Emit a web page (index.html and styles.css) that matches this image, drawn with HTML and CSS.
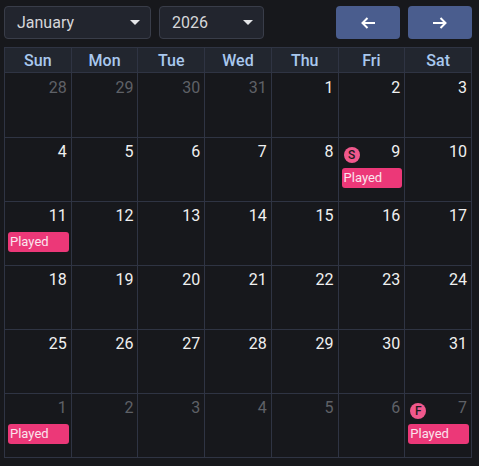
FILE: index.html
```html
<!DOCTYPE html>
<html>
<head>
<meta charset="utf-8">
<link rel="stylesheet" href="styles.css">
</head>
<body>
<div class="app">
  <div class="toolbar">
    <div class="select month"><span>January</span><span class="caret"></span></div>
    <div class="select year"><span>2026</span><span class="caret"></span></div>
    <div class="spacer"></div>
    <button class="nav"><svg width="14" height="12" viewBox="0 0 14 12"><path d="M14 6H2M6.5 1L1.5 6l5 5" fill="none" stroke="#fff" stroke-width="2"/></svg></button>
    <button class="nav"><svg width="14" height="12" viewBox="0 0 14 12"><path d="M0 6h12M7.5 1l5 5-5 5" fill="none" stroke="#fff" stroke-width="2"/></svg></button>
  </div>
  <div class="grid">
    <div class="hd">Sun</div><div class="hd">Mon</div><div class="hd">Tue</div><div class="hd">Wed</div><div class="hd">Thu</div><div class="hd">Fri</div><div class="hd">Sat</div>

    <div class="cell other"><div class="top"><span class="num">28</span></div></div>
    <div class="cell other"><div class="top"><span class="num">29</span></div></div>
    <div class="cell other"><div class="top"><span class="num">30</span></div></div>
    <div class="cell other"><div class="top"><span class="num">31</span></div></div>
    <div class="cell"><div class="top"><span class="num">1</span></div></div>
    <div class="cell"><div class="top"><span class="num">2</span></div></div>
    <div class="cell"><div class="top"><span class="num">3</span></div></div>

    <div class="cell"><div class="top"><span class="num">4</span></div></div>
    <div class="cell"><div class="top"><span class="num">5</span></div></div>
    <div class="cell"><div class="top"><span class="num">6</span></div></div>
    <div class="cell"><div class="top"><span class="num">7</span></div></div>
    <div class="cell"><div class="top"><span class="num">8</span></div></div>
    <div class="cell"><div class="top"><span class="badge">S</span><span class="num">9</span></div><div class="event">Played</div></div>
    <div class="cell"><div class="top"><span class="num">10</span></div></div>

    <div class="cell"><div class="top"><span class="num">11</span></div><div class="event">Played</div></div>
    <div class="cell"><div class="top"><span class="num">12</span></div></div>
    <div class="cell"><div class="top"><span class="num">13</span></div></div>
    <div class="cell"><div class="top"><span class="num">14</span></div></div>
    <div class="cell"><div class="top"><span class="num">15</span></div></div>
    <div class="cell"><div class="top"><span class="num">16</span></div></div>
    <div class="cell"><div class="top"><span class="num">17</span></div></div>

    <div class="cell"><div class="top"><span class="num">18</span></div></div>
    <div class="cell"><div class="top"><span class="num">19</span></div></div>
    <div class="cell"><div class="top"><span class="num">20</span></div></div>
    <div class="cell"><div class="top"><span class="num">21</span></div></div>
    <div class="cell"><div class="top"><span class="num">22</span></div></div>
    <div class="cell"><div class="top"><span class="num">23</span></div></div>
    <div class="cell"><div class="top"><span class="num">24</span></div></div>

    <div class="cell"><div class="top"><span class="num">25</span></div></div>
    <div class="cell"><div class="top"><span class="num">26</span></div></div>
    <div class="cell"><div class="top"><span class="num">27</span></div></div>
    <div class="cell"><div class="top"><span class="num">28</span></div></div>
    <div class="cell"><div class="top"><span class="num">29</span></div></div>
    <div class="cell"><div class="top"><span class="num">30</span></div></div>
    <div class="cell"><div class="top"><span class="num">31</span></div></div>

    <div class="cell other"><div class="top"><span class="num">1</span></div><div class="event">Played</div></div>
    <div class="cell other"><div class="top"><span class="num">2</span></div></div>
    <div class="cell other"><div class="top"><span class="num">3</span></div></div>
    <div class="cell other"><div class="top"><span class="num">4</span></div></div>
    <div class="cell other"><div class="top"><span class="num">5</span></div></div>
    <div class="cell other"><div class="top"><span class="num">6</span></div></div>
    <div class="cell other"><div class="top"><span class="badge">F</span><span class="num">7</span></div><div class="event">Played</div></div>
  </div>
</div>
</body>
</html>
```

FILE: styles.css
```css
* { box-sizing: border-box; }
html, body { margin: 0; padding: 0; background: #17181c; }
body { font-family: Roboto, "Noto Sans", sans-serif; width: 479px; height: 466px; overflow: hidden; }
.app { padding: 6px 7px 0 4px; }
.toolbar { display: flex; align-items: center; height: 33px; gap: 8px; }
.select {
  height: 33px; background: #22252e; border: 1px solid #393d49; border-radius: 4px;
  display: flex; align-items: center; justify-content: space-between;
  padding: 0 10px 0 12px; color: #d6d7da; font-size: 16px;
}
.month { width: 147px; }
.year { width: 105px; }
.caret { width: 0; height: 0; border-left: 5px solid transparent; border-right: 5px solid transparent; border-top: 5px solid #e4e5e8; }
.spacer { flex: 1; }
.nav {
  width: 64px; height: 33px; border: none; border-radius: 4px; background: #4a5d8e;
  display: flex; align-items: center; justify-content: center; padding: 0; margin: 0;
}
.grid {
  margin-top: 8px; width: 468px;
  display: grid; grid-template-columns: repeat(7, 1fr);
  grid-template-rows: 25px 65px repeat(5, 64px);
  border-top: 1px solid #2f3443; border-left: 1px solid #2f3443;
}
.hd {
  background: #22262f; border-right: 1px solid #2f3443; border-bottom: 1px solid #2f3443;
  color: #a9c8ee; font-weight: 500; font-size: 16px; display: flex; align-items: center; justify-content: center;
}
.cell { border-right: 1px solid #2f3443; border-bottom: 1px solid #2f3443; padding: 4px 2px 0 2px; }
.cell:nth-child(-n+14) { padding-top: 5px; }
.top { display: flex; align-items: center; justify-content: flex-end; height: 20px; padding-right: 2px; padding-left: 3px; }
.num { color: #f0f0f0; font-size: 16px; line-height: 20px; margin-left: auto; }
.other .num { color: #5f6167; }
.badge {
  flex-shrink: 0; width: 16px; height: 16px; border-radius: 50%; background: #f0588c; color: #1b1b1f;
  font-size: 12px; font-weight: 500; display: flex; align-items: center; justify-content: center; margin-top: 5px;
}
.event {
  margin-top: 6px; margin-left: 1px; height: 20px; border-radius: 3px; background: #ec3878;
  color: #fbe4ed; font-size: 13px; font-weight: 400; line-height: 20px; padding-left: 2px;
}
```
